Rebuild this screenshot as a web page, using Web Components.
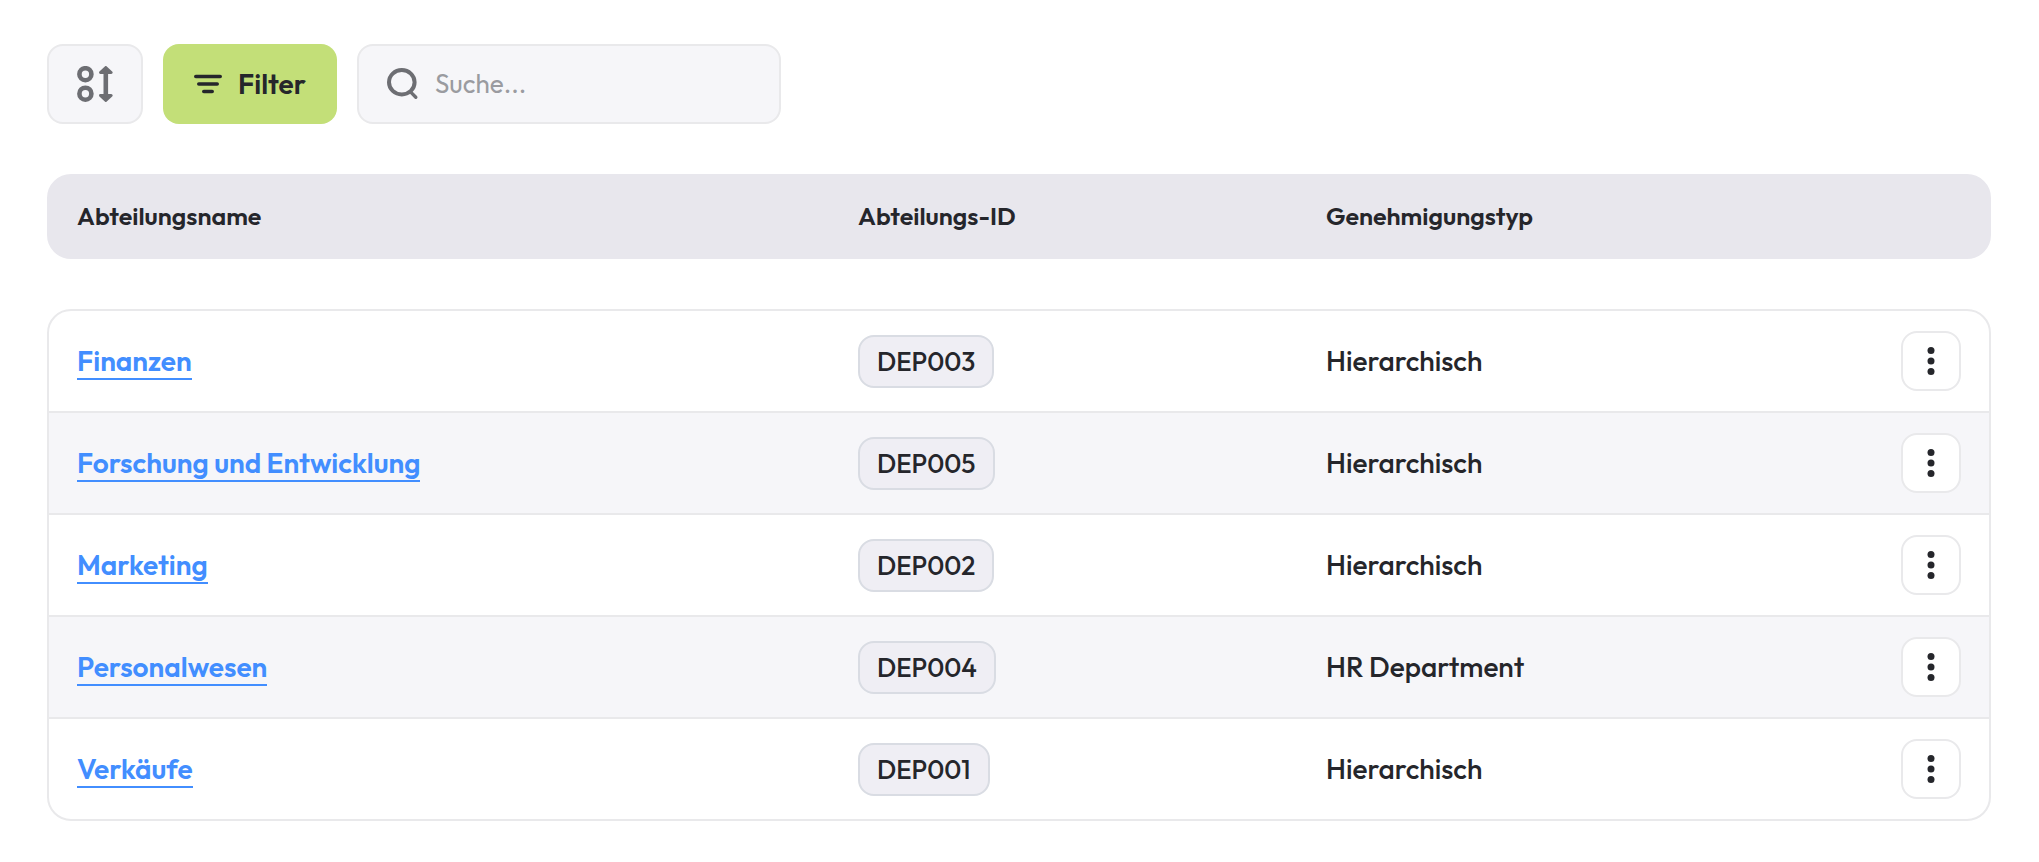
<!DOCTYPE html>
<html lang="de">
<head>
    <meta charset="UTF-8">
    <meta name="viewport" content="width=device-width, initial-scale=1.0">
    <title>Abteilungen</title>
    <style>
        :root {
            --text: #25262b;
            --muted: #6d6e73;
            --placeholder: #9a9ba0;
            --border: #e9e9eb;
            --surface: #f6f6f9;
            --header: #e8e7ed;
            --accent: #c3df78;
            --link: #428eff;
        }

        body {
            margin: 0;
            background: #fff;
            color: var(--text);
            font-family: Outfit, Lato, sans-serif;
            font-size: 28px;
            line-height: 36px;
        }
    </style>
</head>
<body>
    <department-page>
        <tool-bar slot="toolbar">
            <sort-button></sort-button>
            <filter-button>Filter</filter-button>
            <search-field placeholder="Suche..."></search-field>
        </tool-bar>
        <department-table></department-table>
    </department-page>

    <script>
        const departments = [
            { name: 'Finanzen', id: 'DEP003', approval: 'Hierarchisch' },
            { name: 'Forschung und Entwicklung', id: 'DEP005', approval: 'Hierarchisch' },
            { name: 'Marketing', id: 'DEP002', approval: 'Hierarchisch' },
            { name: 'Personalwesen', id: 'DEP004', approval: 'HR Department' },
            { name: 'Verkäufe', id: 'DEP001', approval: 'Hierarchisch' }
        ];

        class DepartmentPage extends HTMLElement {
            connectedCallback() {
                this.attachShadow({ mode: 'open' });

                this.shadowRoot.innerHTML = `
                    <style>
                        :host {
                            display: block;
                            padding: 44px 48px 40px 47px;
                        }

                        main {
                            display: flex;
                            flex-direction: column;
                            gap: 50px;
                        }
                    </style>

                    <main>
                        <slot name="toolbar"></slot>
                        <slot></slot>
                    </main>
                `;
            }
        }

        class ToolBar extends HTMLElement {
            connectedCallback() {
                this.attachShadow({ mode: 'open' });

                this.shadowRoot.innerHTML = `
                    <style>
                        :host {
                            display: flex;
                            align-items: stretch;
                            gap: 20px;
                            height: 80px;
                        }
                    </style>
                    <slot></slot>
                `;
            }
        }

        class SortButton extends HTMLElement {
            connectedCallback() {
                this.attachShadow({ mode: 'open' });

                this.shadowRoot.innerHTML = `
                    <style>
                        :host {
                            display: flex;
                        }

                        button {
                            display: flex;
                            align-items: center;
                            padding: 0 28px;
                            border: 2px solid var(--border);
                            border-radius: 16px;
                            background: var(--surface);
                            color: var(--muted);
                            cursor: pointer;
                        }
                    </style>

                    <button type="button" aria-label="Sortieren">
                        <svg width="36" height="36" viewBox="0 0 36 36" fill="none" stroke="currentColor" stroke-width="4.6">
                            <circle cx="8.4" cy="8.2" r="6" />
                            <circle cx="8.4" cy="27.7" r="6" />
                            <path d="M28.8 7V29" />
                            <path d="M28.8 1.4L34.2 6.6H23.4ZM28.8 34.6L34.2 29.4H23.4Z" fill="currentColor" stroke-width="2.8" stroke-linejoin="round" />
                        </svg>
                    </button>
                `;
            }
        }

        class FilterButton extends HTMLElement {
            connectedCallback() {
                this.attachShadow({ mode: 'open' });

                this.shadowRoot.innerHTML = `
                    <style>
                        :host {
                            display: flex;
                        }

                        button {
                            display: flex;
                            align-items: center;
                            gap: 16px;
                            padding: 0 31px;
                            border: 0;
                            border-radius: 16px;
                            background: var(--accent);
                            color: var(--text);
                            font: inherit;
                            font-weight: 600;
                            cursor: pointer;
                        }
                    </style>

                    <button type="button">
                        <svg width="28" height="20" viewBox="0 0 28 20" fill="none" stroke="currentColor" stroke-width="3.6" stroke-linecap="round">
                            <path d="M1.8 2.5H26.2M4.8 10H23.2M9.8 17.5H18.2" />
                        </svg>
                        <span><slot></slot></span>
                    </button>
                `;
            }
        }

        class SearchField extends HTMLElement {
            connectedCallback() {
                this.attachShadow({ mode: 'open' });
                const placeholder = this.getAttribute('placeholder') || '';

                this.shadowRoot.innerHTML = `
                    <style>
                        :host {
                            display: flex;
                            flex: 0 1 424px;
                            min-width: 0;
                        }

                        label {
                            display: flex;
                            flex: 1;
                            align-items: center;
                            gap: 16px;
                            min-width: 0;
                            padding: 0 28px;
                            border: 2px solid var(--border);
                            border-radius: 16px;
                            background: var(--surface);
                            color: var(--muted);
                        }

                        svg {
                            flex: none;
                        }

                        input {
                            flex: 1;
                            min-width: 0;
                            padding: 0;
                            border: 0;
                            outline: 0;
                            background: none;
                            color: var(--text);
                            font: inherit;
                            font-size: 26px;
                        }

                        input::placeholder {
                            color: var(--placeholder);
                            opacity: 1;
                        }
                    </style>

                    <label>
                        <svg width="32" height="32" viewBox="0 0 32 32" fill="none" stroke="currentColor" stroke-width="4" stroke-linecap="round">
                            <ellipse cx="14.8" cy="14.2" rx="12.8" ry="12.2" />
                            <path d="M24 24.4L28.8 29.2" stroke-width="3.4" />
                        </svg>
                        <input type="text" placeholder="${placeholder}" aria-label="Suche">
                    </label>
                `;
            }
        }

        // Small grey label around an identifier
        class IdBadge extends HTMLElement {
            connectedCallback() {
                this.attachShadow({ mode: 'open' });

                this.shadowRoot.innerHTML = `
                    <style>
                        :host {
                            display: block;
                            width: fit-content;
                            padding: 8px 17px;
                            border: 2px solid #d9dce3;
                            border-radius: 16px;
                            background: #efeef4;
                            font-size: 26px;
                            line-height: 33px;
                        }
                    </style>
                    <slot></slot>
                `;
            }
        }

        class RowMenu extends HTMLElement {
            connectedCallback() {
                this.attachShadow({ mode: 'open' });

                this.shadowRoot.innerHTML = `
                    <style>
                        :host {
                            display: block;
                        }

                        button {
                            display: flex;
                            align-items: center;
                            justify-content: center;
                            width: 60px;
                            height: 60px;
                            padding: 0;
                            border: 2px solid var(--border);
                            border-radius: 16px;
                            background: #fff;
                            color: var(--text);
                            cursor: pointer;
                        }
                    </style>

                    <button type="button" aria-label="Aktionen" aria-haspopup="menu">
                        <svg width="8" height="30" viewBox="0 0 8 30" fill="currentColor">
                            <circle cx="4" cy="4.5" r="3.5" />
                            <circle cx="4" cy="15" r="3.5" />
                            <circle cx="4" cy="25.5" r="3.5" />
                        </svg>
                    </button>
                `;
            }
        }

        class DepartmentTable extends HTMLElement {
            connectedCallback() {
                this.attachShadow({ mode: 'open' });

                const rows = departments.map(d => `
                    <tr>
                        <td><a href="#${d.id}">${d.name}</a></td>
                        <td><id-badge>${d.id}</id-badge></td>
                        <td>${d.approval}</td>
                        <td><row-menu></row-menu></td>
                    </tr>
                `).join('');

                this.shadowRoot.innerHTML = `
                    <style>
                        :host {
                            display: block;
                        }

                        table {
                            display: flex;
                            flex-direction: column;
                            gap: 50px;
                        }

                        thead,
                        tbody {
                            display: block;
                            border: 2px solid var(--border);
                            border-radius: 24px;
                            overflow: hidden;
                        }

                        thead {
                            background: var(--header);
                            border-color: var(--header);
                        }

                        tr {
                            display: grid;
                            grid-template-columns: 781fr 468fr 575fr 60px;
                            align-items: center;
                            padding: 0 28px;
                        }

                        th,
                        td {
                            display: block;
                            padding: 0;
                            text-align: left;
                        }

                        th {
                            padding: 22px 0 23px;
                            font-size: 25px;
                            font-weight: 600;
                        }

                        tbody tr {
                            height: 100px;
                            font-weight: 500;
                        }

                        tbody tr + tr {
                            border-top: 2px solid var(--border);
                        }

                        tbody tr:nth-child(even) {
                            background: var(--surface);
                        }

                        a {
                            border-bottom: 2px solid var(--link);
                            color: var(--link);
                            font-weight: 600;
                            text-decoration: none;
                        }
                    </style>

                    <table>
                        <thead>
                            <tr>
                                <th scope="col">Abteilungsname</th>
                                <th scope="col">Abteilungs-ID</th>
                                <th scope="col">Genehmigungstyp</th>
                                <th></th>
                            </tr>
                        </thead>
                        <tbody>${rows}</tbody>
                    </table>
                `;
            }
        }

        customElements.define('department-page', DepartmentPage);
        customElements.define('tool-bar', ToolBar);
        customElements.define('sort-button', SortButton);
        customElements.define('filter-button', FilterButton);
        customElements.define('search-field', SearchField);
        customElements.define('id-badge', IdBadge);
        customElements.define('row-menu', RowMenu);
        customElements.define('department-table', DepartmentTable);
    </script>
</body>
</html>
